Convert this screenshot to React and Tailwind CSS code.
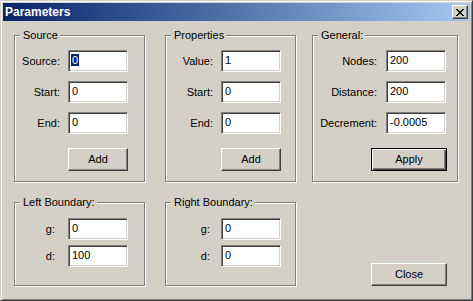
import React from 'react';

const font = { fontFamily: '"Liberation Sans", Arial, sans-serif' };

function Group({ title, className, children }) {
    return (
        <div className={`relative border border-[#808080] shadow-[inset_1px_1px_0_#fff,1px_1px_0_#fff] ${className}`}>
            <span className="absolute top-[-7px] left-[5px] bg-[#d4d0c8] pl-[3px] pr-[2px] text-[11px] leading-[13px] text-black">
                {title}
            </span>
            {children}
        </div>
    );
}

function Field({ value, selected }) {
    return (
        <div className="w-[60px] h-[22px] bg-white border border-t-[#808080] border-l-[#808080] border-b-white border-r-white shadow-[inset_1px_1px_0_#404040,inset_-1px_-1px_0_#d4d0c8] pl-[2px] pt-[2px] text-[11px] leading-[14px] text-black">
            {selected ? <span className="bg-[#0a246a] text-white px-[1px]">{value}</span> : <span className="pl-[1px]">{value}</span>}
        </div>
    );
}

function Row({ label, value, selected, labelW, gap }) {
    return (
        <div className="flex items-center h-[22px]">
            <div className={`${labelW} text-right text-[11px] leading-[13px] text-black`}>{label}</div>
            <div className={gap}>
                <Field value={value} selected={selected} />
            </div>
        </div>
    );
}

function Button({ children, isDefault, className }) {
    if (isDefault) {
        return (
            <div className={`h-[23px] border border-black shadow-[inset_1px_1px_0_#fff,inset_-1px_-1px_0_#404040,inset_-2px_-2px_0_#808080] flex items-center justify-center text-[11px] text-black ${className}`}>
                {children}
            </div>
        );
    }
    return (
        <div className={`h-[23px] border border-t-white border-l-white border-b-[#404040] border-r-[#404040] shadow-[inset_-1px_-1px_0_#808080] flex items-center justify-center text-[11px] text-black ${className}`}>
            {children}
        </div>
    );
}

export default function App() {
    return (
        <div style={font} className="w-[473px] h-[301px] bg-[#d4d0c8] border border-t-[#d4d0c8] border-l-[#d4d0c8] border-b-[#404040] border-r-[#404040] shadow-[inset_1px_1px_0_#fff,inset_-1px_-1px_0_#808080] p-[2px] flex flex-col">
            {/* Title bar */}
            <div className="h-[18px] flex items-center justify-between bg-gradient-to-r from-[#0a246a] to-[#a6caf0] pl-[2px] pr-[2px]">
                <span className="text-white font-bold text-[12px] leading-[14px]">Parameters</span>
                <div className="w-[16px] h-[14px] bg-[#d4d0c8] border border-t-white border-l-white border-b-[#404040] border-r-[#404040] shadow-[inset_-1px_-1px_0_#808080] flex items-center justify-center">
                    <svg width="8" height="7" viewBox="0 0 8 7" shapeRendering="crispEdges">
                        <path d="M0 0h2v1h-2zM6 0h2v1h-2zM1 1h2v1h-2zM5 1h2v1h-2zM2 2h4v1h-4zM3 3h2v1h-2zM2 4h4v1h-4zM1 5h2v1h-2zM5 5h2v1h-2zM0 6h2v1h-2zM6 6h2v1h-2z" fill="#000" />
                    </svg>
                </div>
            </div>

            {/* Top row */}
            <div className="flex pt-[14px] pl-[11px]">
                <Group title="Source" className="w-[131px] h-[147px]">
                    <div className="flex flex-col gap-[9px] pt-[14px]">
                        <Row label="Source:" value="0" selected labelW="w-[45px]" gap="ml-[8px]" />
                        <Row label="Start:" value="0" labelW="w-[45px]" gap="ml-[8px]" />
                        <Row label="End:" value="0" labelW="w-[45px]" gap="ml-[8px]" />
                    </div>
                    <Button className="w-[60px] ml-[53px] mt-[14px]">Add</Button>
                </Group>
                <Group title="Properties" className="w-[131px] h-[147px] ml-[20px]">
                    <div className="flex flex-col gap-[9px] pt-[14px]">
                        <Row label="Value:" value="1" labelW="w-[47px]" gap="ml-[8px]" />
                        <Row label="Start:" value="0" labelW="w-[47px]" gap="ml-[8px]" />
                        <Row label="End:" value="0" labelW="w-[47px]" gap="ml-[8px]" />
                    </div>
                    <Button className="w-[60px] ml-[55px] mt-[14px]">Add</Button>
                </Group>
                <Group title="General:" className="w-[146px] h-[147px] ml-[16px]">
                    <div className="flex flex-col gap-[9px] pt-[14px]">
                        <Row label="Nodes:" value="200" labelW="w-[64px]" gap="ml-[9px]" />
                        <Row label="Distance:" value="200" labelW="w-[64px]" gap="ml-[9px]" />
                        <Row label="Decrement:" value="-0.0005" labelW="w-[64px]" gap="ml-[9px]" />
                    </div>
                    <Button isDefault className="w-[76px] ml-[58px] mt-[14px]">Apply</Button>
                </Group>
            </div>

            {/* Bottom row */}
            <div className="flex items-end pt-[20px] pl-[11px]">
                <Group title="Left Boundary:" className="w-[131px] h-[84px]">
                    <div className="flex flex-col gap-[5px] pt-[15px]">
                        <Row label="g:" value="0" labelW="w-[40px]" gap="ml-[13px]" />
                        <Row label="d:" value="100" labelW="w-[40px]" gap="ml-[13px]" />
                    </div>
                </Group>
                <Group title="Right Boundary:" className="w-[131px] h-[84px] ml-[20px]">
                    <div className="flex flex-col gap-[5px] pt-[15px]">
                        <Row label="g:" value="0" labelW="w-[44px]" gap="ml-[11px]" />
                        <Row label="d:" value="0" labelW="w-[44px]" gap="ml-[11px]" />
                    </div>
                </Group>
                <div className="w-[146px] ml-[16px] flex">
                    <Button className="w-[76px] ml-[59px]">Close</Button>
                </div>
            </div>
        </div>
    );
}
